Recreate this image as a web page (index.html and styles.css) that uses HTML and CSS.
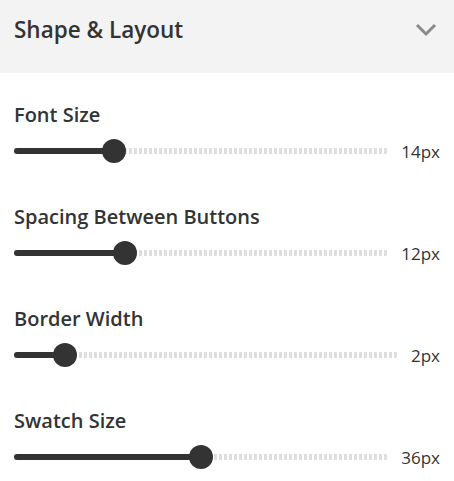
FILE: index.html
```html
<!DOCTYPE html>
<html lang="en">
<head>
    <meta charset="UTF-8">
    <meta name="viewport" content="width=device-width, initial-scale=1.0">
    <title>Shape &amp; Layout</title>
    <link rel="stylesheet" href="styles.css">
</head>
<body>

    <div class="panel-header">
        <h2 class="panel-title">Shape &amp; Layout</h2>
        <svg class="chevron" width="22" height="14" viewBox="0 0 22 14">
            <path d="M2 2 L11 11 L20 2" fill="none" stroke="#8a8a8a" stroke-width="3"/>
        </svg>
    </div>

    <div class="panel-body">
        <!-- font size -->
        <div class="control">
            <label class="control-label">Font Size</label>
            <div class="slider-row">
                <div class="track">
                    <div class="fill" style="--p: 0.25"></div>
                    <div class="thumb" style="--p: 0.25"></div>
                </div>
                <span class="value">14px</span>
            </div>
        </div>

        <!-- spacing -->
        <div class="control">
            <label class="control-label">Spacing Between Buttons</label>
            <div class="slider-row">
                <div class="track">
                    <div class="fill" style="--p: 0.282"></div>
                    <div class="thumb" style="--p: 0.282"></div>
                </div>
                <span class="value">12px</span>
            </div>
        </div>

        <!-- border -->
        <div class="control">
            <label class="control-label">Border Width</label>
            <div class="slider-row">
                <div class="track">
                    <div class="fill" style="--p: 0.109"></div>
                    <div class="thumb" style="--p: 0.109"></div>
                </div>
                <span class="value">2px</span>
            </div>
        </div>

        <!-- swatch -->
        <div class="control">
            <label class="control-label">Swatch Size</label>
            <div class="slider-row">
                <div class="track">
                    <div class="fill" style="--p: 0.5"></div>
                    <div class="thumb" style="--p: 0.5"></div>
                </div>
                <span class="value">36px</span>
            </div>
        </div>
    </div>

</body>
</html>
```

FILE: styles.css
```css
body {
    font-family: 'Open Sans', 'Noto Sans', sans-serif;
    background-color: #ffffff;
    color: #333;
    margin: 0;
    padding: 0;
}
.panel-header {
    background-color: #f3f3f3;
    height: 73px;
    display: flex;
    align-items: flex-start;
    justify-content: space-between;
    padding: 0 17px 0 14px;
    box-sizing: border-box;
}
.panel-title {
    margin: 0;
    padding-top: 14px;
    font-size: 22.5px;
    font-weight: 600;
    line-height: 32px;
    color: #333;
}
.chevron {
    margin-top: 23px;
}
.panel-body {
    padding: 28px 14px 0 14px;
}
.control {
    margin-bottom: 40px;
}
.control:last-child {
    margin-bottom: 0;
}
.control-label {
    display: block;
    font-size: 20px;
    font-weight: 600;
    line-height: 28px;
    color: #333;
}
.slider-row {
    display: flex;
    align-items: center;
    height: 24px;
    margin-top: 10px;
}
.track {
    flex: 1;
    position: relative;
    height: 6px;
    border-radius: 3px;
    background: repeating-linear-gradient(90deg, #dedede 0 3px, transparent 3px 5px);
}
.fill {
    position: absolute;
    left: 0;
    top: 0;
    height: 6px;
    border-radius: 3px;
    background-color: #333;
    width: calc(12px + var(--p) * (100% - 24px));
}
.thumb {
    position: absolute;
    top: -9px;
    width: 24px;
    height: 24px;
    border-radius: 50%;
    background-color: #333;
    left: calc(var(--p) * (100% - 24px));
}
.value {
    margin-left: 13px;
    font-size: 17px;
    color: #333;
}
```
